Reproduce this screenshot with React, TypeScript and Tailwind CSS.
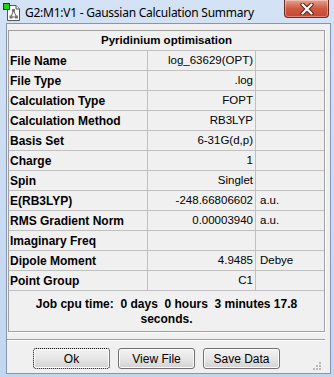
import React from "react";

const rows: [string, string, string][] = [
  ["File Name", "log_63629(OPT)", ""],
  ["File Type", ".log", ""],
  ["Calculation Type", "FOPT", ""],
  ["Calculation Method", "RB3LYP", ""],
  ["Basis Set", "6-31G(d,p)", ""],
  ["Charge", "1", ""],
  ["Spin", "Singlet", ""],
  ["E(RB3LYP)", "-248.66806602", "a.u."],
  ["RMS Gradient Norm", "0.00003940", "a.u."],
  ["Imaginary Freq", "", ""],
  ["Dipole Moment", "4.9485", "Debye"],
  ["Point Group", "C1", ""],
];

const AppIcon = () => (
  <svg width="18" height="18" viewBox="0 0 18 18" className="shrink-0">
    <path d="M4.5 2.5 H13 L16.5 6 V17.5 H4.5 Z" fill="#fff" stroke="#555" />
    <path d="M13 2.5 V6 H16.5" fill="#e8e8e8" stroke="#555" />
    <rect x="0.5" y="0.5" width="6" height="6" fill="#1ed31e" stroke="#0a4a0a" />
    <path d="M10.5 7.5 L8 14 M10.5 7.5 L13.5 14 M8 14 H13.5" stroke="#666" strokeWidth="1" fill="none" />
    <rect x="9" y="6" width="3" height="3" fill="#777" />
    <rect x="6.5" y="12.5" width="3" height="3" fill="#777" />
    <rect x="12" y="12.5" width="3" height="3" fill="#777" />
  </svg>
);

const CloseButton = () => (
  <div className="ml-auto mr-[2px] self-start w-[45px] h-[18px] rounded-b-[4px] border border-t-0 border-[#6b2a22] bg-gradient-to-b from-[#e6a08e] via-[#cf5a43] to-[#c8462f] shadow-[inset_0_0_0_1px_rgba(255,255,255,0.35)] flex items-center justify-center">
    <svg width="14" height="12" viewBox="0 0 14 12">
      <path d="M2.5 1.5 L11.5 10.5 M11.5 1.5 L2.5 10.5" stroke="#5a1f18" strokeWidth="4.2" strokeLinecap="round" />
      <path d="M2.5 1.5 L11.5 10.5 M11.5 1.5 L2.5 10.5" stroke="#ffffff" strokeWidth="2.2" strokeLinecap="round" />
    </svg>
  </div>
);

const WinButton = ({ label, focused }: { label: string; focused?: boolean }) => (
  <div
    className={
      focused
        ? "w-[77px] h-[21px] rounded-[3px] border border-dotted border-[#111] bg-gradient-to-b from-[#f2f2f2] via-[#e6e6e6] to-[#d2d2d2] shadow-[inset_0_0_0_1px_#fbfbfb] flex items-center justify-center text-[12px] text-black"
        : "w-[77px] h-[21px] rounded-[3px] border border-[#707070] bg-gradient-to-b from-[#f2f2f2] via-[#e6e6e6] to-[#d2d2d2] shadow-[inset_0_0_0_1px_#fbfbfb] flex items-center justify-center text-[12px] text-black"
    }
  >
    {label}
  </div>
);

const ResizeGrip = () => (
  <svg width="10" height="10" viewBox="0 0 10 10" className="absolute right-[8px] bottom-[2px]">
    <rect x="7" y="1" width="2" height="2" fill="#b8b8b8" />
    <rect x="4" y="4" width="2" height="2" fill="#b8b8b8" />
    <rect x="7" y="4" width="2" height="2" fill="#b8b8b8" />
    <rect x="1" y="7" width="2" height="2" fill="#b8b8b8" />
    <rect x="4" y="7" width="2" height="2" fill="#b8b8b8" />
    <rect x="7" y="7" width="2" height="2" fill="#b8b8b8" />
  </svg>
);

export default function App() {
  return (
    <div className="w-[334px] h-[377px] flex flex-col bg-gradient-to-b from-[#d3e2f4] to-[#c2d6ef] pl-[6px] pr-[3px] pb-[3px] font-['Liberation_Sans',Arial,sans-serif] overflow-hidden">
      {/* title bar */}
      <div className="h-[23px] flex items-start -ml-[3px]">
        <div className="flex items-center gap-[4px] pt-[3px]">
          <AppIcon />
          <span className="text-[12px] text-black font-['Noto_Sans',sans-serif] leading-[17px] tracking-[-0.25px]">
            G2:M1:V1 - Gaussian Calculation Summary
          </span>
        </div>
        <CloseButton />
      </div>

      {/* client area */}
      <div className="relative flex-1 flex flex-col border border-[#8497b0] bg-[#f0f0f0]">
        {/* summary table */}
        <div className="mt-[6px] ml-[1px] w-[317px] border border-[#a0a0a0] shadow-[1px_1px_0_#ffffff] text-black">
          <div className="h-[19px] flex items-center justify-center text-[11.5px] font-bold">
            Pyridinium optimisation
          </div>
          {rows.map(([label, value, unit]) => (
            <div
              key={label}
              className="h-[20px] grid grid-cols-[139px_108px_1fr] border-t border-[#c0c0c0]"
            >
              <div className="border-r border-[#c0c0c0] flex items-center pl-[1px] text-[12px] font-bold">
                {label}
              </div>
              <div className="border-r border-[#c0c0c0] flex items-center justify-end pr-[2px] text-[11.5px]">
                {value}
              </div>
              <div className="flex items-center pl-[4px] text-[11.5px]">{unit}</div>
            </div>
          ))}
          <div className="h-[41px] border-t border-[#c0c0c0] flex items-center justify-center text-center text-[12px] font-bold leading-[15px] pt-[1px]">
            <span className="whitespace-pre">
              {"Job cpu time:  0 days  0 hours  3 minutes 17.8"}
              <br />
              {"seconds."}
            </span>
          </div>
        </div>

        {/* separator */}
        <div className="mt-[7px] w-[318px] h-[2px] border-t border-[#a0a0a0] border-b border-b-white" />

        {/* buttons */}
        <div className="mt-[7px] pl-[26px] flex gap-[8px]">
          <WinButton label="Ok" focused />
          <WinButton label="View File" />
          <WinButton label="Save Data" />
        </div>

        <ResizeGrip />
      </div>
    </div>
  );
}
